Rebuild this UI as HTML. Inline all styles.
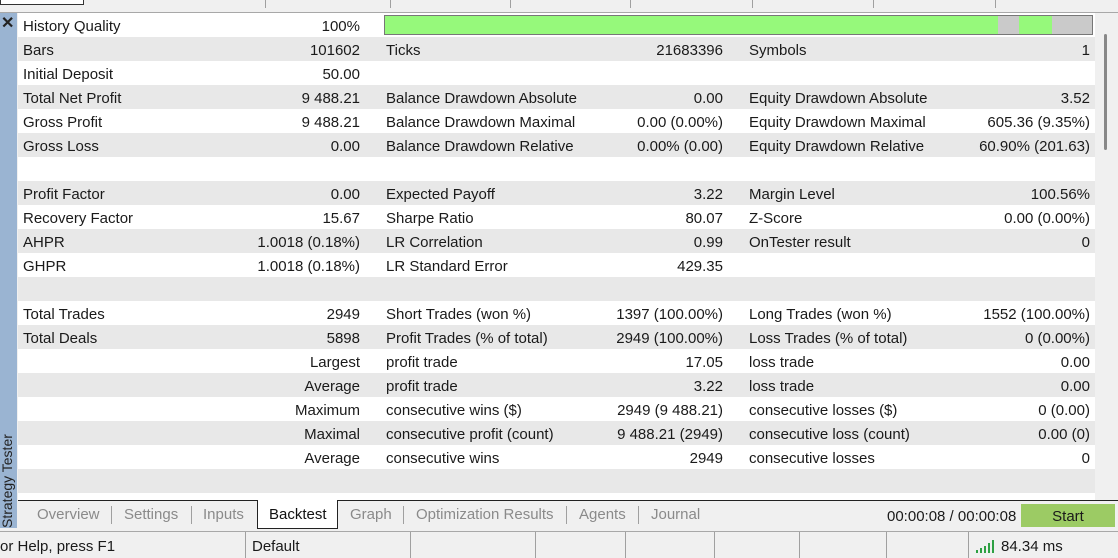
<!DOCTYPE html>
<html><head><meta charset="utf-8"><style>
*{margin:0;padding:0;box-sizing:border-box}
body{width:1118px;height:558px;overflow:hidden;background:#f0f0f0;font-family:"Liberation Sans",sans-serif;font-size:15px;color:#1a1a1a;position:relative}
.a{position:absolute;white-space:nowrap}
.row{position:absolute;left:18px;width:1077px;height:24px}
.g{background:#e8e8e8}.w{background:#fff}
.t{position:absolute;top:5px;line-height:17px}
.r{text-align:right}
.sep{position:absolute;width:1px;background:#a0a0a0}
.tab{position:absolute;top:506px;color:#8a8a8a;line-height:18px}
</style></head><body>
<div class="a" style="left:0;top:0;width:84px;height:5px;background:#fff;border:1px solid #333;border-top:none"></div>
<div class="sep" style="left:265px;top:0;height:8px"></div>
<div class="sep" style="left:390px;top:0;height:8px"></div>
<div class="sep" style="left:510px;top:0;height:8px"></div>
<div class="sep" style="left:630px;top:0;height:8px"></div>
<div class="sep" style="left:752px;top:0;height:8px"></div>
<div class="sep" style="left:873px;top:0;height:8px"></div>
<div class="sep" style="left:995px;top:0;height:8px"></div>
<div class="a" style="left:0;top:12px;width:1118px;height:1px;background:#a8a8a8"></div>
<div class="a" style="left:0;top:13px;width:17px;height:515px;background:#9ab4d2"></div>
<div class="a" style="left:1px;top:13px;font-size:16px;font-weight:bold;color:#222">✕</div>
<div class="a" style="left:-49px;top:464px;transform:rotate(-90deg);transform-origin:center;width:112px;font-size:14px;color:#222;text-align:left">Strategy Tester</div>
<div class="a" style="left:18px;top:13px;width:1077px;height:487px;background:#fff"></div>
<div id="rows"></div>
<div class="a" style="left:1095px;top:13px;width:23px;height:487px;background:#f0f0f0"></div>
<div class="a" style="left:1104px;top:34px;width:3px;height:116px;background:#888;border-radius:2px"></div>
<div class="a" style="left:18px;top:500px;width:1100px;height:1px;background:#222"></div>
<div class="a" style="left:257px;top:500px;width:81px;height:29px;background:#fff;border:1px solid #222;border-top:none"></div>
<div class="tab" style="left:37px">Overview</div>
<div class="sep" style="left:111px;top:506px;height:18px"></div>
<div class="tab" style="left:124px">Settings</div>
<div class="sep" style="left:191px;top:506px;height:18px"></div>
<div class="tab" style="left:203px">Inputs</div>
<div class="tab" style="left:269px;color:#111">Backtest</div>
<div class="tab" style="left:350px">Graph</div>
<div class="sep" style="left:403px;top:506px;height:18px"></div>
<div class="tab" style="left:416px">Optimization Results</div>
<div class="sep" style="left:566px;top:506px;height:18px"></div>
<div class="tab" style="left:579px">Agents</div>
<div class="sep" style="left:638px;top:506px;height:18px"></div>
<div class="tab" style="left:651px">Journal</div>
<div class="a" style="left:887px;top:508px;line-height:18px">00:00:08 / 00:00:08</div>
<div class="a" style="left:1021px;top:504px;width:94px;height:23px;background:#9ccb64;text-align:center;line-height:25px">Start</div>
<div class="a" style="left:0;top:531px;width:1118px;height:1px;background:#a8a8a8"></div>
<div class="a" style="left:0;top:538px;line-height:18px">or Help, press F1</div>
<div class="a" style="left:252px;top:538px;line-height:18px">Default</div>
<div class="sep" style="left:245px;top:532px;height:26px"></div>
<div class="sep" style="left:410px;top:532px;height:26px"></div>
<div class="sep" style="left:535px;top:532px;height:26px"></div>
<div class="sep" style="left:625px;top:532px;height:26px"></div>
<div class="sep" style="left:714px;top:532px;height:26px"></div>
<div class="sep" style="left:799px;top:532px;height:26px"></div>
<div class="sep" style="left:886px;top:532px;height:26px"></div>
<div class="sep" style="left:968px;top:532px;height:26px"></div>
<svg class="a" style="left:976px;top:540px" width="20" height="14"><g fill="#2ea043"><rect x="0" y="10" width="2" height="3"/><rect x="4" y="8" width="2" height="5"/><rect x="8" y="6" width="2" height="7"/><rect x="12" y="3" width="2" height="10"/><rect x="16" y="0" width="2" height="13"/></g></svg>
<div class="a" style="left:1001px;top:538px;line-height:18px">84.34 ms</div>
<script>
var R=[
["History Quality","100%","","","",""],
["Bars","101602","Ticks","21683396","Symbols","1"],
["Initial Deposit","50.00","","","",""],
["Total Net Profit","9 488.21","Balance Drawdown Absolute","0.00","Equity Drawdown Absolute","3.52"],
["Gross Profit","9 488.21","Balance Drawdown Maximal","0.00 (0.00%)","Equity Drawdown Maximal","605.36 (9.35%)"],
["Gross Loss","0.00","Balance Drawdown Relative","0.00% (0.00)","Equity Drawdown Relative","60.90% (201.63)"],
["","","","","",""],
["Profit Factor","0.00","Expected Payoff","3.22","Margin Level","100.56%"],
["Recovery Factor","15.67","Sharpe Ratio","80.07","Z-Score","0.00 (0.00%)"],
["AHPR","1.0018 (0.18%)","LR Correlation","0.99","OnTester result","0"],
["GHPR","1.0018 (0.18%)","LR Standard Error","429.35","",""],
["","","","","",""],
["Total Trades","2949","Short Trades (won %)","1397 (100.00%)","Long Trades (won %)","1552 (100.00%)"],
["Total Deals","5898","Profit Trades (% of total)","2949 (100.00%)","Loss Trades (% of total)","0 (0.00%)"],
["","Largest","profit trade","17.05","loss trade","0.00"],
["","Average","profit trade","3.22","loss trade","0.00"],
["","Maximum","consecutive wins ($)","2949 (9 488.21)","consecutive losses ($)","0 (0.00)"],
["","Maximal","consecutive profit (count)","9 488.21 (2949)","consecutive loss (count)","0.00 (0)"],
["","Average","consecutive wins","2949","consecutive losses","0"],
["","","","","",""]];
var h="";
R.forEach(function(r,i){
 var y=13+i*24;
 h+='<div class="row '+(i%2?'g':'w')+'" style="top:'+y+'px">'+
 '<div class="t" style="left:5px">'+r[0]+'</div>'+
 '<div class="t r" style="right:735px">'+r[1]+'</div>'+
 '<div class="t" style="left:368px">'+r[2]+'</div>'+
 '<div class="t r" style="right:372px">'+r[3]+'</div>'+
 '<div class="t" style="left:731px">'+r[4]+'</div>'+
 '<div class="t r" style="right:5px">'+r[5]+'</div></div>';
});
h+='<div class="a" style="left:384px;top:15px;width:709px;height:20px;border:1px solid #777;background:#cacaca"><div class="a" style="left:0;top:0;width:613px;height:18px;background:#96f97b"></div><div class="a" style="left:634px;top:0;width:33px;height:18px;background:#96f97b"></div></div>';
document.getElementById("rows").innerHTML=h;
</script>
</body></html>
